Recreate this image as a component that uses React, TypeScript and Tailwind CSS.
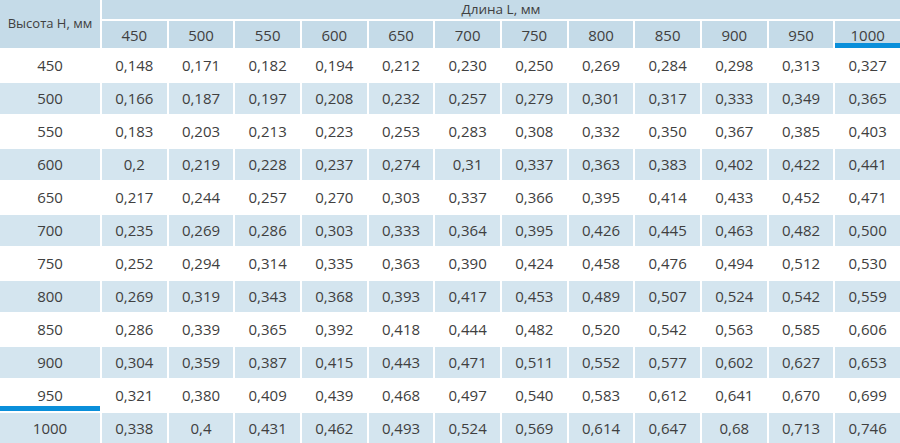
const lengths = ['450', '500', '550', '600', '650', '700', '750', '800', '850', '900', '950', '1000'];

const rows: [string, string[]][] = [
  ['450', ['0,148', '0,171', '0,182', '0,194', '0,212', '0,230', '0,250', '0,269', '0,284', '0,298', '0,313', '0,327']],
  ['500', ['0,166', '0,187', '0,197', '0,208', '0,232', '0,257', '0,279', '0,301', '0,317', '0,333', '0,349', '0,365']],
  ['550', ['0,183', '0,203', '0,213', '0,223', '0,253', '0,283', '0,308', '0,332', '0,350', '0,367', '0,385', '0,403']],
  ['600', ['0,2', '0,219', '0,228', '0,237', '0,274', '0,31', '0,337', '0,363', '0,383', '0,402', '0,422', '0,441']],
  ['650', ['0,217', '0,244', '0,257', '0,270', '0,303', '0,337', '0,366', '0,395', '0,414', '0,433', '0,452', '0,471']],
  ['700', ['0,235', '0,269', '0,286', '0,303', '0,333', '0,364', '0,395', '0,426', '0,445', '0,463', '0,482', '0,500']],
  ['750', ['0,252', '0,294', '0,314', '0,335', '0,363', '0,390', '0,424', '0,458', '0,476', '0,494', '0,512', '0,530']],
  ['800', ['0,269', '0,319', '0,343', '0,368', '0,393', '0,417', '0,453', '0,489', '0,507', '0,524', '0,542', '0,559']],
  ['850', ['0,286', '0,339', '0,365', '0,392', '0,418', '0,444', '0,482', '0,520', '0,542', '0,563', '0,585', '0,606']],
  ['900', ['0,304', '0,359', '0,387', '0,415', '0,443', '0,471', '0,511', '0,552', '0,577', '0,602', '0,627', '0,653']],
  ['950', ['0,321', '0,380', '0,409', '0,439', '0,468', '0,497', '0,540', '0,583', '0,612', '0,641', '0,670', '0,699']],
  ['1000', ['0,338', '0,4', '0,431', '0,462', '0,493', '0,524', '0,569', '0,614', '0,647', '0,68', '0,713', '0,746']],
];

function App() {
  return (
    <div
      className="w-[900px] h-[443px] overflow-hidden bg-white text-[#404040]"
      style={{ fontFamily: '"Open Sans", "Liberation Sans", sans-serif' }}
    >
      <div className="grid grid-cols-[100px_repeat(12,1fr)] grid-rows-[19px_27px_repeat(12,31px)] gap-[2px]">
        {/* Header */}
        <div className="row-span-2 bg-[#c5dbe8] flex items-center justify-center text-[13px]">
          Высота H, мм
        </div>
        <div className="col-span-12 bg-[#c5dbe8] flex items-center justify-center text-[13.5px] leading-none">
          Длина L, мм
        </div>
        {lengths.map((l) => (
          <div
            key={l}
            className={
              l === '1000'
                ? 'bg-[#c5dbe8] flex items-center justify-center pt-[1px] text-[15px] shadow-[inset_0_-5px_0_#0a8fda]'
                : 'bg-[#c5dbe8] flex items-center justify-center pt-[1px] text-[15px]'
            }
          >
            {l}
          </div>
        ))}

        {/* Body */}
        {rows.map(([h, values], i) => {
          const shaded = i % 2 === 1;
          return [
            <div
              key={h}
              className={
                (shaded ? 'bg-[#d4e5ef] ' : '') +
                (h === '950' ? 'shadow-[inset_0_-5px_0_#0a8fda] ' : '') +
                'flex items-center justify-center text-[15px]'
              }
            >
              {h}
            </div>,
            ...values.map((v, j) => (
              <div
                key={h + '-' + j}
                className={(shaded ? 'bg-[#d4e5ef] ' : '') + 'flex items-center justify-center text-[15px]'}
              >
                {v}
              </div>
            )),
          ];
        })}
      </div>
    </div>
  );
}

export default App;
